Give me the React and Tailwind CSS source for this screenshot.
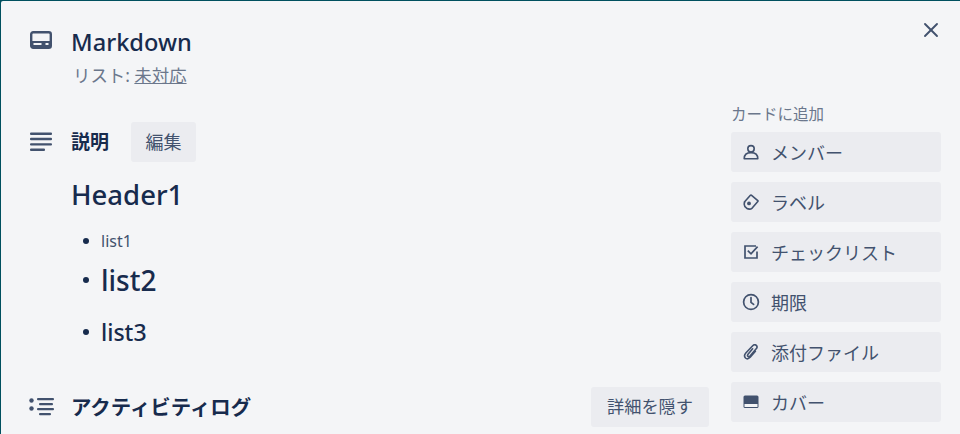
import React from 'react';
import { X } from 'lucide-react';

function CardIcon() {
  return (
    <svg width="24" height="24" viewBox="0 0 24 24" fill="none">
      <rect x="2.2" y="3.2" width="19.6" height="15.6" rx="2" stroke="#42526e" strokeWidth="2.4" />
      <rect x="2" y="12" width="20" height="6.5" fill="#42526e" />
      <rect x="4.5" y="14" width="8" height="2" fill="#f4f5f7" />
      <rect x="16.5" y="14" width="3" height="2" fill="#f4f5f7" />
    </svg>
  );
}

function DescIcon() {
  return (
    <svg width="24" height="24" viewBox="0 0 24 24" fill="#42526e">
      <rect x="1" y="2.5" width="22" height="2.4" rx="1" />
      <rect x="1" y="7.8" width="22" height="2.4" rx="1" />
      <rect x="1" y="13.2" width="22" height="2.4" rx="1" />
      <rect x="1" y="18.5" width="15" height="2.4" rx="1" />
    </svg>
  );
}

function ActivityIcon() {
  return (
    <svg width="26" height="24" viewBox="0 0 26 24" fill="#42526e">
      <circle cx="2.5" cy="5.5" r="2.2" />
      <circle cx="2.5" cy="13.5" r="2.2" />
      <rect x="8" y="3" width="17" height="2.2" rx="1" />
      <rect x="10" y="8" width="14" height="2.2" rx="1" />
      <rect x="8" y="13" width="17" height="2.2" rx="1" />
      <rect x="10" y="18" width="12" height="2.2" rx="1" />
    </svg>
  );
}

const icons = {
  member: (
    <svg width="16" height="16" viewBox="0 0 16 16" fill="none" stroke="#42526e" strokeWidth="1.6">
      <circle cx="8" cy="4.8" r="3.2" />
      <path d="M1.2 14.8h13.6c0-3.8-2.6-6.2-6.8-6.2s-6.8 2.4-6.8 6.2z" strokeLinejoin="round" />
    </svg>
  ),
  label: (
    <svg width="16" height="16" viewBox="0 0 16 16" fill="none" stroke="#42526e" strokeWidth="1.6">
      <path d="M1.2 8.2L7.4 1.2c.3-.3.6-.3.9-.1l6.5 5.5c.3.3.3.6 0 .9l-5.6 6.6c-1.6 1.3-3.8 1.2-5.6.1-1.9-1.4-3-3.6-1.9-6z" strokeLinejoin="round" />
      <circle cx="6" cy="9.4" r="1.9" fill="#42526e" stroke="none" />
    </svg>
  ),
  check: (
    <svg width="16" height="16" viewBox="0 0 16 16" fill="none" stroke="#42526e" strokeWidth="1.7">
      <path d="M14 7.5V14H2V2h11" />
      <path d="M4.8 6.6L8 9.8 14.6 2.6" />
    </svg>
  ),
  clock: (
    <svg width="18" height="18" viewBox="0 0 18 18" fill="none" stroke="#42526e" strokeWidth="1.7">
      <circle cx="9" cy="9" r="7.4" />
      <path d="M9 4.6V9.4L11.6 11.4" strokeLinecap="round" />
    </svg>
  ),
  clip: (
    <svg width="16" height="16" viewBox="0 0 16 16" fill="none" stroke="#42526e" strokeWidth="1.6" strokeLinecap="round">
      <path d="M9.6 4.8L5 10.2c-.8 1-.6 1.7-.1 2.1.6.5 1.3.5 2.1-.3l6.2-7.2c1.2-1.4 1-2.6.1-3.4-1-.9-2.4-.9-3.6.4L2.8 9c-1.6 1.9-1.4 3.9-.3 5 1.1 1 3 1 4.7-.7l5.2-6" />
    </svg>
  ),
  cover: (
    <svg width="16" height="16" viewBox="0 0 16 16" fill="none">
      <rect x="0.5" y="1.5" width="15" height="12.5" rx="1.5" fill="#42526e" />
      <rect x="1.5" y="10" width="13" height="3" fill="#f4f5f7" />
    </svg>
  ),
};

const actions = [
  { key: 'member', name: 'メンバー' },
  { key: 'label', name: 'ラベル' },
  { key: 'check', name: 'チェックリスト' },
  { key: 'clock', name: '期限' },
  { key: 'clip', name: '添付ファイル' },
  { key: 'cover', name: 'カバー' },
];

function Bullet() {
  return <span className="w-[6px] h-[6px] rounded-full bg-[#172b4d] shrink-0 mr-[12px]" />;
}

export default function App() {
  return (
    <div className="w-[960px] h-[434px] overflow-hidden flex bg-[#00505f] pt-px font-['Noto_Sans','Noto_Sans_CJK_JP',sans-serif] text-[#172b4d]">
      <div className="w-px shrink-0" />
      <div className="relative flex-1 flex bg-[#f4f5f7] rounded-tl-[2px]">
        <button className="absolute top-[17px] right-[17px] text-[#42526e]">
          <X size={24} strokeWidth={1.9} />
        </button>

        <div className="w-[708px] shrink-0 pl-[28px]">
          {/* title */}
          <div className="flex pt-[27px]">
            <div className="w-[42px] pt-[1px]"><CardIcon /></div>
            <div>
              <div className="text-[23.6px] leading-[28px] font-medium">Markdown</div>
              <div className="mt-[7px] pl-[2px] text-[17.4px] leading-[24px] text-[#6b778c]">
                リスト: <span className="underline">未対応</span>
              </div>
            </div>
          </div>

          {/* description */}
          <div className="flex items-center mt-[35px] h-[40px]">
            <div className="w-[42px]"><DescIcon /></div>
            <span className="text-[19px] font-bold">説明</span>
            <button className="ml-[22px] w-[65px] h-[40px] rounded-[3px] bg-[#ebecf0] text-[18px] text-[#42526e]">編集</button>
          </div>

          <div className="pl-[42px]">
            <div className="mt-[13px] text-[27.5px] leading-[40px] font-medium">Header1</div>
            <ul className="mt-[14px] pl-[12px]">
              <li className="flex items-center text-[16px] leading-[24px] text-[#42526e]"><Bullet />list1</li>
              <li className="flex items-center mt-[5px] text-[28px] leading-[44px] font-medium"><Bullet />list2</li>
              <li className="flex items-center mt-[10px] text-[23px] leading-[40px] font-medium"><Bullet />list3</li>
            </ul>
          </div>

          {/* activity */}
          <div className="flex items-center mt-[35px] h-[40px]">
            <div className="w-[42px]"><ActivityIcon /></div>
            <span className="text-[20.4px] font-bold">アクティビティログ</span>
            <button className="ml-auto w-[118px] h-[40px] rounded-[3px] bg-[#ebecf0] text-[17.2px] text-[#42526e]">詳細を隠す</button>
          </div>
        </div>

        <div className="ml-[22px] w-[210px] pt-[103px]">
          <div className="text-[15.5px] leading-[20px] text-[#6b778c]">カードに追加</div>
          <div className="mt-[8px] flex flex-col gap-[10px]">
            {actions.map((a) => (
              <button key={a.key} className="flex items-center h-[40px] rounded-[3px] bg-[#ebecf0] text-[18px] text-[#42526e]">
                <span className="w-[40px] flex justify-center">{icons[a.key]}</span>
                <span className="pt-[2px]">{a.name}</span>
              </button>
            ))}
          </div>
        </div>
      </div>
    </div>
  );
}
